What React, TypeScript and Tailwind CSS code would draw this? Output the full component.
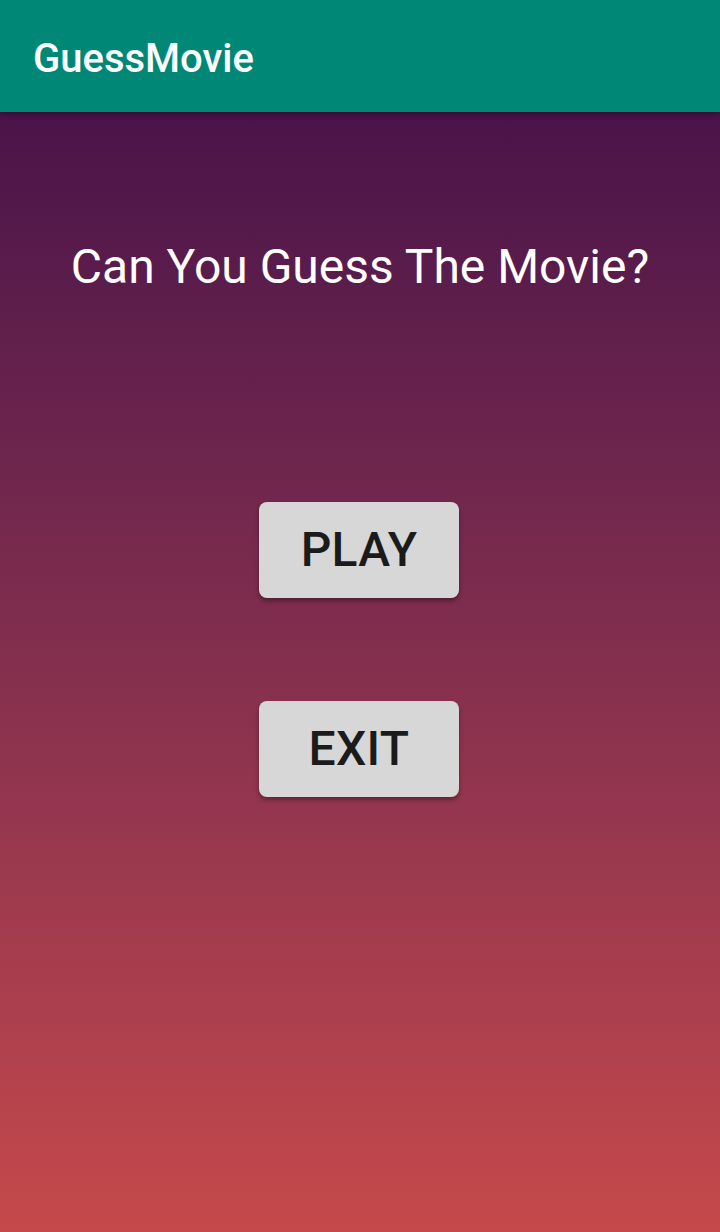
import React from 'react';

const MenuButton: React.FC<{ label: string; className?: string }> = ({
	label,
	className = '',
}) => (
	<button
		className={`flex h-[96px] w-[200px] items-center justify-center rounded-[8px] bg-[#d6d7d6] text-[48px] font-medium tracking-[0.3px] text-[#1b1b1b] shadow-[0_3px_4px_rgba(0,0,0,0.35)] ${className}`}
	>
		{label}
	</button>
);

const App: React.FC = () => {
	return (
		<div className="flex h-[1232px] w-[720px] flex-col font-['Roboto',sans-serif]">
			<header className="z-10 flex h-[112px] shrink-0 items-center bg-[#018776] px-[33px] pt-[6px] shadow-[0_2px_6px_rgba(0,0,0,0.35)]">
				<h1 className="text-[40px] font-medium text-white">GuessMovie</h1>
			</header>
			<main className="flex flex-1 flex-col items-center bg-gradient-to-b from-[#4a1349] to-[#c6494a] pr-[2px] pt-[127px]">
				<h2 className="pl-[2px] text-[48px] leading-[56px] text-white">
					Can You Guess The Movie?
				</h2>
				<MenuButton label="PLAY" className="mt-[207px]" />
				<MenuButton label="EXIT" className="mt-[103px]" />
			</main>
		</div>
	);
};

export default App;
